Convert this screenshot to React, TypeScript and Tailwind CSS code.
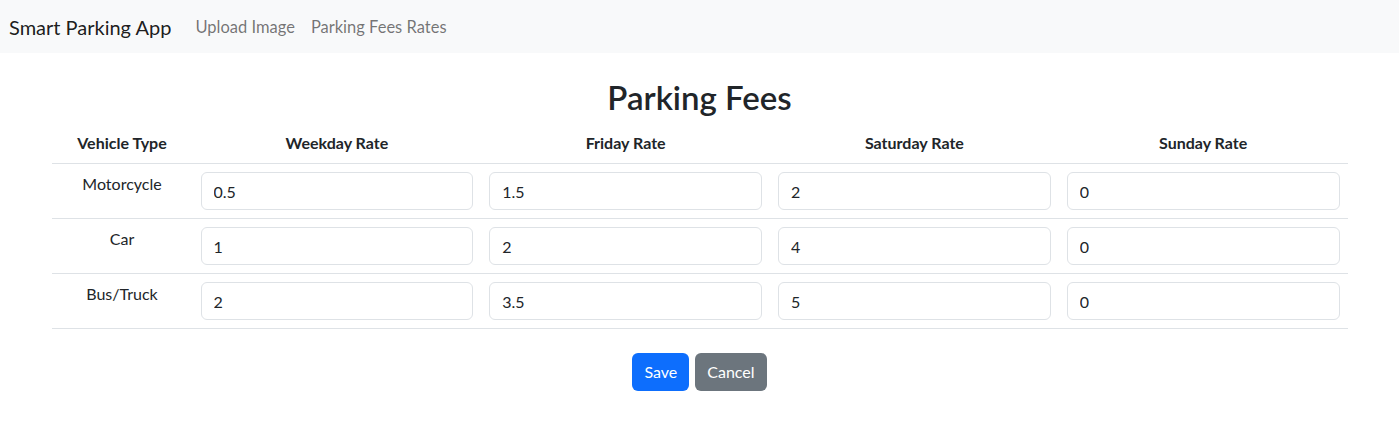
import React from "react";

const rows = [
  { type: "Motorcycle", vals: ["0.5", "1.5", "2", "0"] },
  { type: "Car", vals: ["1", "2", "4", "0"] },
  { type: "Bus/Truck", vals: ["2", "3.5", "5", "0"] },
];

const heads = ["Weekday Rate", "Friday Rate", "Saturday Rate", "Sunday Rate"];

export default function App() {
  return (
    <div
      className="min-h-[437px] bg-white text-[#212529]"
      style={{ fontFamily: 'Lato, "Noto Sans", sans-serif' }}
    >
      <nav className="flex h-[53px] items-center bg-[#f8f9fa] px-[9px]">
        <span className="mr-4 text-[20px] leading-[30px] text-black/90">Smart Parking App</span>
        <span className="px-2 text-[16.5px] leading-6 text-black/55">Upload Image</span>
        <span className="px-2 text-[16.5px] leading-6 text-black/55">Parking Fees Rates</span>
      </nav>
      <main className="mx-auto w-[1296px]">
        <h1 className="pt-[23px] pb-[5px] text-center text-[33px] font-semibold leading-[42px]">Parking Fees</h1>
        <table className="w-full table-fixed border-collapse text-[16px]">
          <colgroup>
            <col className="w-[141px]" />
            <col />
            <col />
            <col />
            <col />
          </colgroup>
          <thead>
            <tr className="border-b border-[#dee2e6]">
              <th className="p-2 text-center font-bold leading-6">Vehicle Type</th>
              {heads.map((h) => (
                <th key={h} className="p-2 text-center font-bold leading-6">
                  {h}
                </th>
              ))}
            </tr>
          </thead>
          <tbody>
            {rows.map((r) => (
              <tr key={r.type} className="border-b border-[#dee2e6] align-top">
                <td className="p-2 text-center leading-6">{r.type}</td>
                {r.vals.map((v, i) => (
                  <td key={i} className="p-2">
                    <input
                      defaultValue={v}
                      className="block h-[38px] w-full rounded-[6px] border border-[#dee2e6] px-3 text-[16px] text-[#212529] outline-none"
                    />
                  </td>
                ))}
              </tr>
            ))}
          </tbody>
        </table>
        <div className="mt-6 flex justify-center gap-[6px]">
          <button className="h-[38px] rounded-[6px] bg-[#0d6efd] px-3 text-[16px] text-white">Save</button>
          <button className="h-[38px] rounded-[6px] bg-[#6c757d] px-3 text-[16px] text-white">Cancel</button>
        </div>
      </main>
    </div>
  );
}
